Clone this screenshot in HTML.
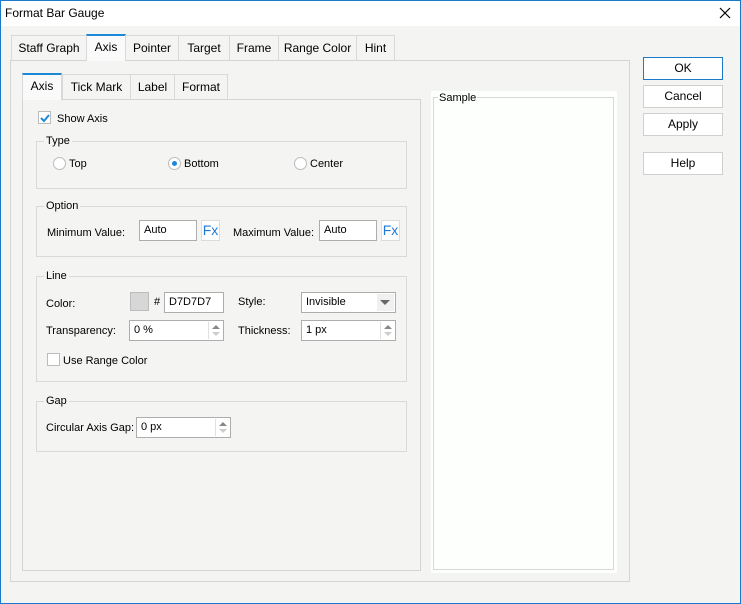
<!DOCTYPE html>
<html><head><meta charset="utf-8"><style>
*{box-sizing:border-box;margin:0;padding:0}
body{width:741px;height:604px;overflow:hidden;font-family:"Liberation Sans",sans-serif;font-size:11px;color:#000;background:#f4f4f3;position:relative}
.a{position:absolute}
.l{position:absolute;margin-top:2px}
.frame{position:absolute;left:0;top:0;width:741px;height:604px;border:1px solid #1979ca;pointer-events:none;z-index:9}
.title{position:absolute;left:0;top:0;width:741px;height:26px;background:#fff}
.tab{position:absolute;height:25px;border:1px solid #d9d9d9;border-bottom:none;background:#f4f4f3;text-align:center;line-height:24px}
.tab.sel{background:#fafafa;border-top:2px solid #1e88d8;height:27px;line-height:22px}
.panel{position:absolute;border:1px solid #d4d4d4}
.grp{position:absolute;border:1px solid #d9d9d9}
.gl{position:absolute;top:-7px;left:7px;background:#f4f4f3;padding:0 2px}
.inp{position:absolute;height:21px;border:1px solid #adadad;background:#fff;padding-left:4px;line-height:19px}
.fx{position:absolute;width:19px;height:21px;border:1px solid #dcdcdc;background:#fff;color:#1e7ad8;font-size:14px;line-height:19px;text-align:center}
.spin{position:absolute;right:1px;top:1px;width:14px;height:17px;border-left:1px solid #e0e0e0}
.spin:before{content:"";position:absolute;left:3px;top:3px;border:4px solid transparent;border-top:none;border-bottom:4px solid #888}
.spin:after{content:"";position:absolute;left:3px;top:10px;border:4px solid transparent;border-bottom:none;border-top:4px solid #ccc}
.btn{position:absolute;left:643px;width:80px;height:23px;border:1px solid #d0d0d0;background:#fff;text-align:center;line-height:21px;font-size:12px}
.cb{position:absolute;width:13px;height:13px;border:1px solid #bcbcbc;background:#fff}
.rd{position:absolute;width:13px;height:13px;border:1px solid #bcbcbc;border-radius:50%;background:#fff}
.t{font-size:12px}
</style></head><body>
<div class="frame"></div>
<div class="title"></div>
<div class="a" style="left:5px;top:6px;font-size:12px">Format Bar Gauge</div>
<svg class="a" style="left:719px;top:7px" width="12" height="12"><path d="M1 1L11 11M11 1L1 11" stroke="#000" stroke-width="1.2"/></svg>

<div class="panel" style="left:10px;top:60px;width:620px;height:522px"></div>
<div class="tab t" style="left:11px;top:35px;width:76px">Staff Graph</div>
<div class="tab sel t" style="left:86px;top:34px;width:40px">Axis</div>
<div class="tab t" style="left:125px;top:35px;width:54px">Pointer</div>
<div class="tab t" style="left:178px;top:35px;width:52px">Target</div>
<div class="tab t" style="left:229px;top:35px;width:50px">Frame</div>
<div class="tab t" style="left:278px;top:35px;width:79px">Range Color</div>
<div class="tab t" style="left:356px;top:35px;width:39px">Hint</div>

<div class="panel" style="left:22px;top:99px;width:399px;height:472px"></div>
<div class="tab t" style="left:62px;top:74px;width:69px">Tick Mark</div>
<div class="tab t" style="left:130px;top:74px;width:45px">Label</div>
<div class="tab t" style="left:174px;top:74px;width:54px">Format</div>
<div class="tab sel t" style="left:22px;top:73px;width:40px">Axis</div>

<div class="cb" style="left:38px;top:111px"></div>
<svg class="a" style="left:40px;top:113px" width="10" height="10"><path d="M1 5L4 8L9 2" stroke="#1e88d8" stroke-width="2" fill="none"/></svg>
<div class="l" style="left:57px;top:111px">Show Axis</div>

<div class="grp" style="left:36px;top:141px;width:371px;height:48px"><span class="gl">Type</span></div>
<div class="rd" style="left:53px;top:157px"></div><div class="l" style="left:69px;top:156px">Top</div>
<div class="rd" style="left:168px;top:157px"></div><div class="a" style="left:172px;top:161px;width:5px;height:5px;border-radius:50%;background:#1e88d8"></div><div class="l" style="left:184px;top:156px">Bottom</div>
<div class="rd" style="left:294px;top:157px"></div><div class="l" style="left:310px;top:156px">Center</div>

<div class="grp" style="left:36px;top:206px;width:371px;height:51px"><span class="gl">Option</span></div>
<div class="l" style="left:47px;top:225px">Minimum Value:</div>
<div class="inp" style="left:139px;top:220px;width:58px">Auto</div>
<div class="fx" style="left:201px;top:220px">Fx</div>
<div class="l" style="left:233px;top:225px">Maximum Value:</div>
<div class="inp" style="left:319px;top:220px;width:58px">Auto</div>
<div class="fx" style="left:381px;top:220px">Fx</div>

<div class="grp" style="left:36px;top:276px;width:371px;height:106px"><span class="gl">Line</span></div>
<div class="l" style="left:46px;top:296px">Color:</div>
<div class="a" style="left:130px;top:292px;width:19px;height:19px;background:#d7d7d7;border:1px solid #bcbcbc"></div>
<div class="l" style="left:154px;top:294px">#</div>
<div class="inp" style="left:164px;top:292px;width:60px">D7D7D7</div>
<div class="l" style="left:238px;top:294px">Style:</div>
<div class="inp" style="left:301px;top:292px;width:95px">Invisible
<div class="a" style="right:1px;top:1px;width:17px;height:17px;background:#f0f0f0"></div>
<div class="a" style="right:5px;top:7px;border:5px solid transparent;border-bottom:none;border-top:5px solid #666"></div></div>
<div class="l" style="left:46px;top:323px">Transparency:</div>
<div class="inp" style="left:129px;top:320px;width:95px">0 %<div class="spin"></div></div>
<div class="l" style="left:238px;top:323px">Thickness:</div>
<div class="inp" style="left:301px;top:320px;width:95px">1 px<div class="spin"></div></div>
<div class="cb" style="left:47px;top:353px"></div>
<div class="l" style="left:63px;top:353px">Use Range Color</div>

<div class="grp" style="left:36px;top:401px;width:371px;height:51px"><span class="gl">Gap</span></div>
<div class="l" style="left:46px;top:420px">Circular Axis Gap:</div>
<div class="inp" style="left:136px;top:417px;width:95px">0 px<div class="spin"></div></div>

<div class="a" style="left:431px;top:91px;width:186px;height:482px;background:#fdfffd"></div>
<div class="a" style="left:433px;top:97px;width:181px;height:473px;border:1px solid #d8d8d8"></div>
<div class="a" style="left:438px;top:92px;background:#fdfffd;padding:0 1px">Sample</div>

<div class="btn" style="top:57px;border-color:#1979ca">OK</div>
<div class="btn" style="top:85px">Cancel</div>
<div class="btn" style="top:113px">Apply</div>
<div class="btn" style="top:152px">Help</div>
</body></html>
